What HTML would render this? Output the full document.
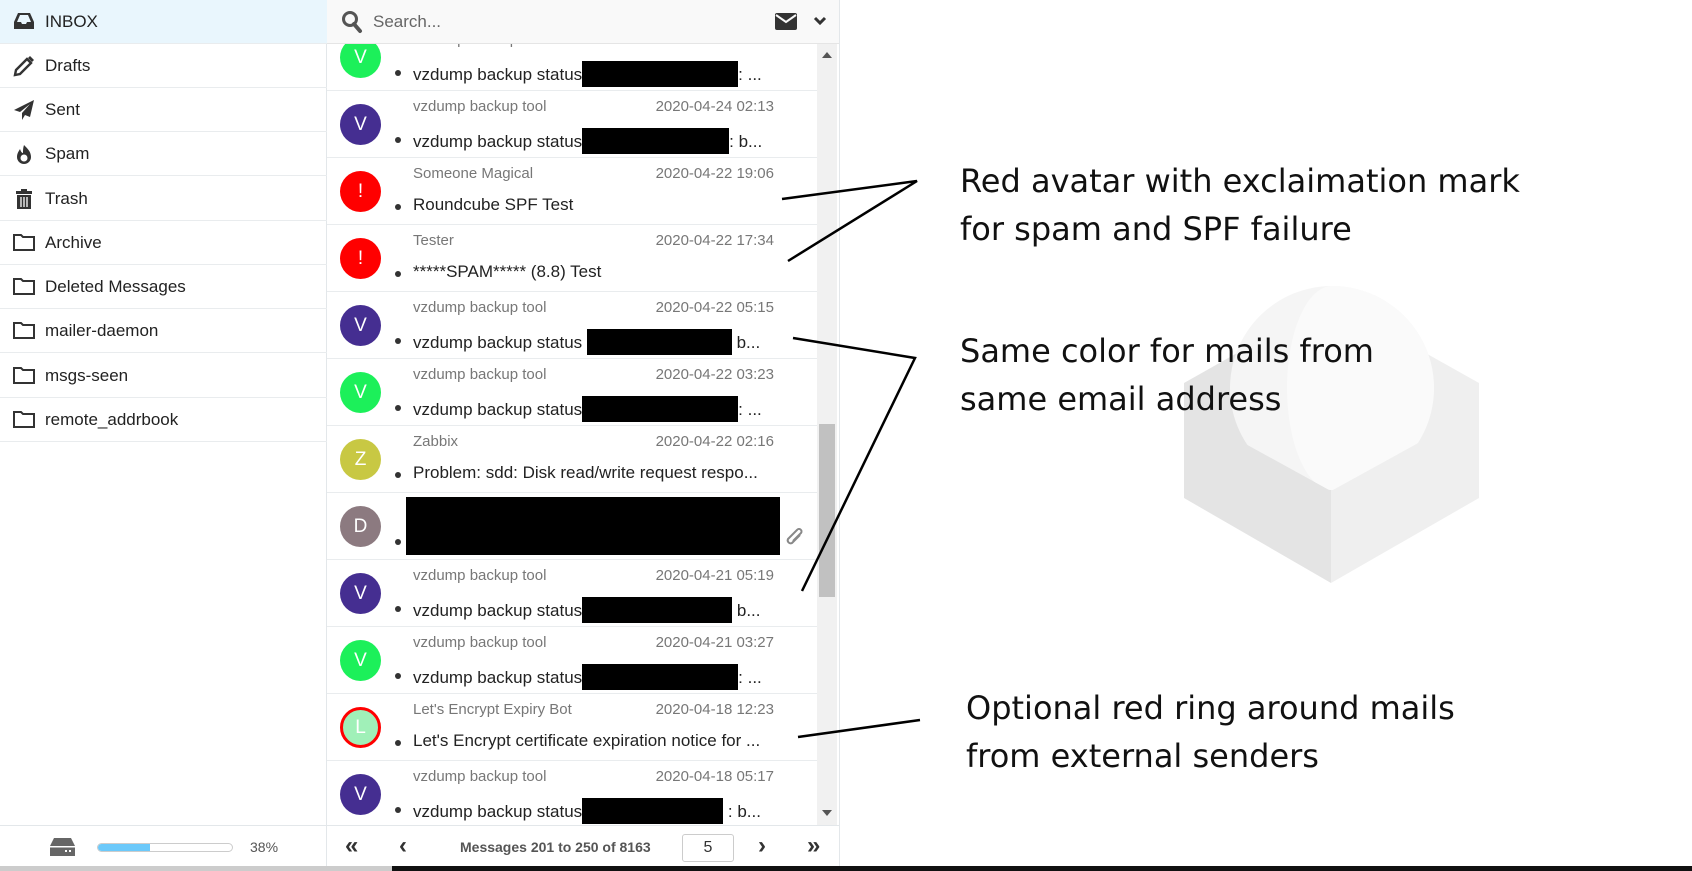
<!DOCTYPE html>
<html><head><meta charset="utf-8"><style>
*{box-sizing:border-box;margin:0;padding:0}
body{width:1692px;height:871px;overflow:hidden;background:#fff;font-family:"Liberation Sans",sans-serif;position:relative}
.side{position:absolute;left:0;top:0;width:327px;height:825px;border-right:1px solid #e3e7ea;background:#fff}
.fi{position:absolute;left:0;width:327px;height:44px;border-bottom:1px solid #e9ecee;font-size:17px;color:#222}
.fi span{position:absolute;left:45px;top:12px}
.fi svg{position:absolute;left:13px;top:11px}
.list{position:absolute;left:327px;top:0;width:513px;height:825px;overflow:hidden;border-right:1px solid #e3e7ea}
.hdr{position:absolute;left:0;top:0;width:513px;height:44px;background:#f9f9f9;border-bottom:1px solid #e5e5e5;z-index:3}
.row{position:absolute;left:0;width:490px;height:67px;border-bottom:1px solid #e9ecee;background:#fff}
.av{position:absolute;left:13px;top:13px;width:41px;height:41px;border-radius:50%;color:#fff;font-size:19px;text-align:center;line-height:41px}
.snd{position:absolute;left:86px;top:7px;font-size:15px;color:#777}
.dt{position:absolute;right:43px;top:7px;font-size:15px;color:#777}
.sub{position:absolute;left:86px;top:37px;font-size:17px;color:#222;white-space:nowrap}
.dot{position:absolute;left:68px;top:46px;width:6px;height:6px;border-radius:50%;background:#333}
.blk{display:inline-block;background:#000;height:26px;vertical-align:-7px}
.sb{position:absolute;left:490px;top:44px;width:20px;height:781px;background:#f1f1f1}
.foot{position:absolute;top:825px;height:42px;background:#fff;border-top:1px solid #e3e7ea}
.ann{position:absolute;left:960px;color:#111;line-height:48px;font-family:"DejaVu Sans","Liberation Sans",sans-serif;font-size:32px}
</style></head><body>
<svg style="position:absolute;left:1180px;top:280px" width="320" height="310" viewBox="1180 280 320 310">
<defs><clipPath id="c"><polygon points="1180,280 1500,280 1500,442 1420,442 1331,491 1242,442 1180,442"/></clipPath></defs>
<path d="M1184 383 L1331 300 L1331 583 L1184 498Z" fill="#e4e4e4"/>
<path d="M1331 300 L1479 383 L1479 498 L1331 583Z" fill="#efefef"/>
<g clip-path="url(#c)"><circle cx="1332" cy="388" r="102" fill="#f5f5f5"/><path d="M1332 286 A45 102 0 0 0 1332 490 A102 102 0 0 0 1332 286Z" fill="#fafafa"/></g>
</svg>
<div class="side">
<div class="fi" style="top:0;background:#e9f6fd"><svg width="22" height="20" viewBox="0 0 22 20"><path d="M1 11 L5 2 H17 L21 11 V18 H1Z" fill="#333"/><path d="M4 11 L7 4 H15 L18 11 H14 L13 13 H9 L8 11Z" fill="#e9f6fd"/></svg><span>INBOX</span></div>
<div class="fi" style="top:44px"><svg width="22" height="22" viewBox="0 0 22 22"><path d="M3 15 L14 4 L18 8 L7 19 L2 20Z" fill="none" stroke="#333" stroke-width="2.4"/><path d="M15 3 L17 1 L21 5 L19 7Z" fill="#333"/></svg><span>Drafts</span></div>
<div class="fi" style="top:88px"><svg width="22" height="22" viewBox="0 0 22 22"><path d="M21 1 L1 11 L7 13 L17 5 L9 14 L9 21 L12 16 L17 18Z" fill="#333"/></svg><span>Sent</span></div>
<div class="fi" style="top:132px"><svg width="22" height="22" viewBox="0 0 22 22"><path d="M11 2 C15 6 18 9 18 14 A7 7 0 0 1 4 14 C4 10 6 8 7 6 C8 9 9 10 10 10 C10 7 10 5 11 2Z" fill="#333"/><circle cx="11" cy="15" r="3.5" fill="#fff"/></svg><span>Spam</span></div>
<div class="fi" style="top:177px"><svg width="22" height="22" viewBox="0 0 22 22"><rect x="3" y="3" width="16" height="3" fill="#333"/><rect x="8" y="1" width="6" height="2" fill="#333"/><rect x="4" y="7" width="14" height="14" fill="#333"/><path d="M8 9V19M11 9V19M14 9V19" stroke="#fff" stroke-width="1.3"/></svg><span>Trash</span></div>
<div class="fi" style="top:221px"><svg width="22" height="20" viewBox="0 0 22 20"><path d="M1 3 H8 L10 5 H21 V18 H1Z" fill="none" stroke="#333" stroke-width="2"/></svg><span>Archive</span></div>
<div class="fi" style="top:265px"><svg width="22" height="20" viewBox="0 0 22 20"><path d="M1 3 H8 L10 5 H21 V18 H1Z" fill="none" stroke="#333" stroke-width="2"/></svg><span>Deleted Messages</span></div>
<div class="fi" style="top:309px"><svg width="22" height="20" viewBox="0 0 22 20"><path d="M1 3 H8 L10 5 H21 V18 H1Z" fill="none" stroke="#333" stroke-width="2"/></svg><span>mailer-daemon</span></div>
<div class="fi" style="top:354px"><svg width="22" height="20" viewBox="0 0 22 20"><path d="M1 3 H8 L10 5 H21 V18 H1Z" fill="none" stroke="#333" stroke-width="2"/></svg><span>msgs-seen</span></div>
<div class="fi" style="top:398px"><svg width="22" height="20" viewBox="0 0 22 20"><path d="M1 3 H8 L10 5 H21 V18 H1Z" fill="none" stroke="#333" stroke-width="2"/></svg><span>remote_addrbook</span></div>
</div>
<div class="foot" style="left:0;width:327px;border-right:1px solid #e3e7ea">
<svg style="position:absolute;left:50px;top:12px" width="25" height="18" viewBox="0 0 25 18"><path d="M4 0 H21 L25 8 V18 H0 V8Z" fill="#666"/><rect x="0" y="8" width="25" height="1.5" fill="#fff"/><rect x="15" y="12" width="2" height="2" fill="#fff"/><rect x="19" y="12" width="2" height="2" fill="#fff"/></svg>
<div style="position:absolute;left:97px;top:17px;width:136px;height:9px;border:1px solid #ccc;border-radius:5px;overflow:hidden"><div style="width:52px;height:100%;background:#6cc9fa"></div></div>
<div style="position:absolute;left:250px;top:13px;font-size:14px;color:#555">38%</div>
</div>
<div class="list">
<div class="hdr">
<svg style="position:absolute;left:14px;top:10px" width="22" height="24" viewBox="0 0 22 24"><circle cx="9" cy="9" r="6.5" fill="none" stroke="#555" stroke-width="3"/><path d="M13 14 L19 21" stroke="#555" stroke-width="4" stroke-linecap="round"/></svg>
<div style="position:absolute;left:46px;top:12px;font-size:17px;color:#666">Search...</div>
<svg style="position:absolute;left:448px;top:13px" width="22" height="17" viewBox="0 0 22 17"><rect x="0" y="0" width="22" height="17" rx="2" fill="#333"/><path d="M1 2 L11 9 L21 2" fill="none" stroke="#f9f9f9" stroke-width="2"/></svg>
<svg style="position:absolute;left:486px;top:15px" width="14" height="12" viewBox="0 0 14 12"><path d="M2 3 L7 8 L12 3" fill="none" stroke="#333" stroke-width="3"/></svg>
</div>
<div class="row" style="top:24px"><div class="av" style="background:#1cf05a">V</div><div class="snd">vzdump backup tool</div><div class="dt">2020-04-24 03:27</div><div class="dot"></div><div class="sub">vzdump backup status<span class="blk" style="width:156px"></span>: ...</div></div>
<div class="row" style="top:91px"><div class="av" style="background:#452e91">V</div><div class="snd">vzdump backup tool</div><div class="dt">2020-04-24 02:13</div><div class="dot"></div><div class="sub">vzdump backup status<span class="blk" style="width:147px"></span>: b...</div></div>
<div class="row" style="top:158px"><div class="av" style="background:#f00">!</div><div class="snd">Someone Magical</div><div class="dt">2020-04-22 19:06</div><div class="dot"></div><div class="sub">Roundcube SPF Test</div></div>
<div class="row" style="top:225px"><div class="av" style="background:#f00">!</div><div class="snd">Tester</div><div class="dt">2020-04-22 17:34</div><div class="dot"></div><div class="sub">*****SPAM***** (8.8) Test</div></div>
<div class="row" style="top:292px"><div class="av" style="background:#452e91">V</div><div class="snd">vzdump backup tool</div><div class="dt">2020-04-22 05:15</div><div class="dot"></div><div class="sub">vzdump backup status <span class="blk" style="width:145px"></span> b...</div></div>
<div class="row" style="top:359px"><div class="av" style="background:#1cf05a">V</div><div class="snd">vzdump backup tool</div><div class="dt">2020-04-22 03:23</div><div class="dot"></div><div class="sub">vzdump backup status<span class="blk" style="width:156px"></span>: ...</div></div>
<div class="row" style="top:426px"><div class="av" style="background:#c8c843">Z</div><div class="snd">Zabbix</div><div class="dt">2020-04-22 02:16</div><div class="dot"></div><div class="sub">Problem: sdd: Disk read/write request respo...</div></div>
<div class="row" style="top:493px"><div class="av" style="background:#8c7a80">D</div><div class="dot"></div><div style="position:absolute;left:79px;top:4px;width:374px;height:58px;background:#000"></div>
<svg style="position:absolute;left:457px;top:34px" width="22" height="22" viewBox="0 0 22 22"><path d="M16 8 L8 16 A3 3 0 0 1 4 12 L13 3 A2 2 0 0 1 17 6 L9 14" fill="none" stroke="#888" stroke-width="2"/></svg></div>
<div class="row" style="top:560px"><div class="av" style="background:#452e91">V</div><div class="snd">vzdump backup tool</div><div class="dt">2020-04-21 05:19</div><div class="dot"></div><div class="sub">vzdump backup status<span class="blk" style="width:150px"></span> b...</div></div>
<div class="row" style="top:627px"><div class="av" style="background:#1cf05a">V</div><div class="snd">vzdump backup tool</div><div class="dt">2020-04-21 03:27</div><div class="dot"></div><div class="sub">vzdump backup status<span class="blk" style="width:156px"></span>: ...</div></div>
<div class="row" style="top:694px"><div class="av" style="background:#a0f0b8;border:3px solid #f00;line-height:35px">L</div><div class="snd">Let's Encrypt Expiry Bot</div><div class="dt">2020-04-18 12:23</div><div class="dot"></div><div class="sub">Let's Encrypt certificate expiration notice for ...</div></div>
<div class="row" style="top:761px"><div class="av" style="background:#452e91">V</div><div class="snd">vzdump backup tool</div><div class="dt">2020-04-18 05:17</div><div class="dot"></div><div class="sub">vzdump backup status<span class="blk" style="width:141px"></span> : b...</div></div>
<div class="sb"><div style="position:absolute;left:5px;top:8px;border:5px solid transparent;border-bottom:6px solid #555;border-top:0"></div><div style="position:absolute;left:2px;top:380px;width:16px;height:173px;background:#c1c1c1"></div><div style="position:absolute;left:5px;top:766px;border:5px solid transparent;border-top:6px solid #555;border-bottom:0"></div></div>
</div>
<div class="foot" style="left:327px;width:513px;border-right:1px solid #e3e7ea;font-weight:bold;color:#333">
<div style="position:absolute;left:18px;top:6px;font-size:24px">«</div>
<div style="position:absolute;left:72px;top:6px;font-size:24px">‹</div>
<div style="position:absolute;left:133px;top:13px;font-size:14px;color:#555">Messages 201 to 250 of 8163</div>
<div style="position:absolute;left:355px;top:8px;width:52px;height:28px;border:1px solid #ccc;border-radius:3px;text-align:center;line-height:26px;font-size:16px;font-weight:normal">5</div>
<div style="position:absolute;left:431px;top:6px;font-size:24px">›</div>
<div style="position:absolute;left:480px;top:6px;font-size:24px">»</div>
</div>
<div style="position:absolute;left:392px;top:866px;width:1300px;height:5px;background:#111"></div>
<div style="position:absolute;left:0;top:866px;width:392px;height:5px;background:#ccc"></div>
<svg style="position:absolute;left:0;top:0" width="1692" height="871">
<g stroke="#000" stroke-width="2.5" fill="none">
<path d="M782 199 L917 181 L788 261"/>
<path d="M793 338 L915 358 L802 591"/>
<path d="M798 737 L920 720"/>
</g></svg>
<div class="ann" style="top:157px">Red avatar with exclaimation mark<br>for spam and SPF failure</div>
<div class="ann" style="top:327px">Same color for mails from<br>same email address</div>
<div class="ann" style="top:684px;left:966px">Optional red ring around mails<br>from external senders</div>
</body></html>
